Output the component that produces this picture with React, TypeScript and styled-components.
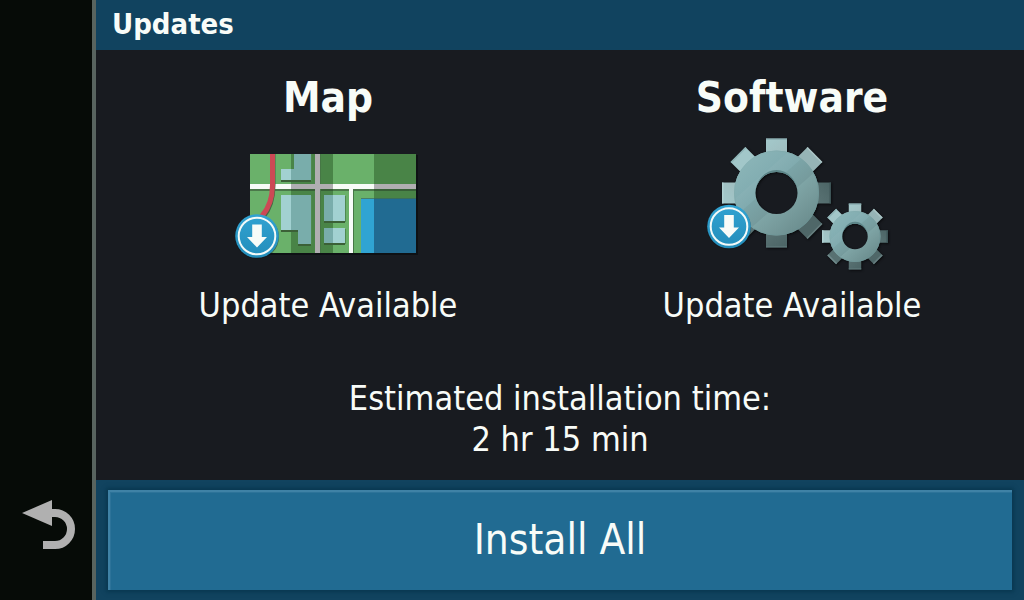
import React from "react";
import styled, { createGlobalStyle } from "styled-components";

const GlobalStyle = createGlobalStyle`
  *, *::before, *::after { box-sizing: border-box; }
  body {
    margin: 0;
    background: #181b20;
    color: #f8fcf8;
    font-family: "DejaVu Sans Condensed", "DejaVu Sans", sans-serif;
    font-stretch: condensed;
  }
`;

const Screen = styled.div`
  display: flex;
  min-height: 100vh;
`;

const SideBar = styled.nav`
  display: flex;
  flex-direction: column;
  justify-content: flex-end;
  flex: 0 0 96px;
  padding: 0 14px 44px 17px;
  background: #060b07;
  border-right: 4px solid #58645f;
`;

const BackButton = styled.button`
  display: flex;
  padding: 0;
  border: 0;
  background: none;
  cursor: pointer;
`;

const Panel = styled.div`
  display: flex;
  flex-direction: column;
  flex: 1;
  min-width: 0;
`;

const TitleBar = styled.header`
  height: 50px;
  padding: 0 16px;
  background: #11435f;
`;

const Title = styled.h1`
  margin: 0;
  font-size: 29px;
  line-height: 48px;
  font-weight: bold;
`;

const Content = styled.main`
  flex: 1;
  padding-top: 24px;
  text-align: center;
`;

const Updates = styled.div`
  display: grid;
  grid-template-columns: 1fr 1fr;
`;

const Update = styled.section`
  display: flex;
  flex-direction: column;
  align-items: center;
`;

const UpdateName = styled.h2`
  margin: 0;
  font-size: 42px;
  line-height: 48px;
  font-weight: bold;
`;

const Picture = styled.svg`
  width: 200px;
  height: 150px;
  margin: 8px 0 5px;
`;

const Message = styled.p`
  margin: 0;
  font-size: 34px;
  line-height: 41px;
`;

const Estimate = styled(Message)`
  margin-top: 52px;
`;

const ActionBar = styled.footer`
  display: flex;
  padding: 10px 12px;
  background: #11435f;
`;

const InstallButton = styled.button`
  flex: 1;
  height: 100px;
  padding: 0;
  border: 0;
  background: #216b92;
  box-shadow: inset 2px 2px 0 #3f82a6, inset 3px 3px 0 #2d7399, 0 0 4px 2px #083750;
  color: inherit;
  font: inherit;
  font-size: 42px;
  line-height: 48px;
  cursor: pointer;
`;

function Badge({ x, y }: { x: number; y: number }) {
  return (
    <g transform={`translate(${x} ${y})`}>
      <circle cy="1" r="22" fill="#0d1316" opacity=".45" />
      <circle r="21.8" fill="url(#badge)" />
      <circle r="18.3" fill="none" stroke="#f3faf8" strokeWidth="2" />
      <path d="M-4.800 -11.500H4.800V1H10L0 11.500L-10 1H-4.800Z" fill="#f8fcf8" />
    </g>
  );
}

function MapPicture() {
  return (
    <Picture viewBox="228 130 200 150" aria-hidden="true">
      <defs>
        <linearGradient id="badge" x1="0" y1="0" x2="0" y2="1">
          <stop offset="0" stopColor="#31a3d2" />
          <stop offset="1" stopColor="#238dba" />
        </linearGradient>
        <clipPath id="mapEdge"><path d="M250 154H416V253H250Z" /></clipPath>
      </defs>
      <path d="M251 155H418V255H251Z" fill="#0e1114" />
      <g clipPath="url(#mapEdge)">
        <path d="M250 154H416V253H250Z" fill="#6ab16a" />
        <path d="M291 154H333V253H291ZM374 154H416V253H374Z" fill="#498447" />
        <path d="M250 189H416V191H250Z" fill="#4b784a" />
        <path d="M291 189H333V191H291ZM374 189H416V191H374Z" fill="#375f36" />
        <path d="M281 180H311V182H281ZM281 230H298V232H281ZM298 244H311V246H298ZM324 221H345V223H324ZM324 243H345V245H324Z" fill="#3b6037" />
        <path d="M311 154H312V181H311ZM311 196H312V245H311ZM345 196H346V222H345ZM345 229H346V244H345Z" fill="#4f8950" />
        <path d="M281 169H291V180H281ZM281 195H291V230H281ZM333 195H345V221H333ZM333 228H345V243H333Z" fill="#a2d1d1" />
        <path d="M291 169H294V154H311V180H291ZM291 195H311V244H298V230H291ZM324 195H333V221H324ZM324 228H333V243H324Z" fill="#79adab" />
        <path d="M361 199H374V253H361Z" fill="#30a4d3" />
        <path d="M374 199H416V253H374Z" fill="#216b92" />
        <path d="M361 198H416V199H361Z" fill="#315f6c" opacity=".6" />
        <path d="M250 184H416V189H250ZM349 188H353V253H349Z" fill="#f8fcf8" />
        <path d="M353 190H354V253H353ZM320 154H321V253H320Z" fill="#467745" />
        <path d="M291 184H333V189H291ZM374 184H416V189H374ZM315 154H320V253H315Z" fill="#b0aeb1" />
        <path d="M273 154V185Q273 205 263 217L258 222" fill="none" stroke="#426b43" strokeWidth="5" />
        <path d="M272.500 154V185Q272.500 204 262 216L257 221" fill="none" stroke="#cc4955" strokeWidth="5" />
      </g>
      <Badge x={257} y={236} />
    </Picture>
  );
}

const teeth = [
  { face: "url(#toothLight)", edge: "#89adb0" },
  { face: "#96b4b6", edge: "#b0c9ca" },
  { face: "url(#toothDark)", edge: "#395052" },
  { face: "#4f6768", edge: "#6d8586" },
  { face: "url(#toothDark)", edge: "#5d7778" },
  { face: "#587172", edge: "#769192" },
  { face: "url(#toothLight)", edge: "#b4d3d4" },
  { face: "#a2c7c9", edge: "#8bb0b3" },
];

type GearProps = { x: number; y: number; reach: number; body: number; hole: number; tooth: number };

function Gear({ x, y, reach, body, hole, tooth }: GearProps) {
  const ring = `M${-body} 0A${body} ${body} 0 1 1 ${body} 0A${body} ${body} 0 1 1 ${-body} 0ZM${-hole} 0A${hole} ${hole} 0 1 0 ${hole} 0A${hole} ${hole} 0 1 0 ${-hole} 0Z`;
  return (
    <g transform={`translate(${x} ${y})`} filter="url(#gearShadow)">
      {teeth.map(({ face, edge }, i) => (
        <g key={i} transform={`rotate(${i * 45})`}>
          <rect x={-tooth / 2} y={-reach} width={tooth} height={reach - body + 5} fill={face} />
          <rect x={-tooth / 2} y={-reach} width={tooth} height="1.500" fill={edge} opacity=".8" />
        </g>
      ))}
      <path d={ring} fill="url(#gearFace)" fillRule="evenodd" />
      <circle r={body - 0.5} fill="none" stroke="url(#gearRim)" />
      <path
        d={`M${-hole} 0A${hole} ${hole + 2} 0 0 1 ${hole} 0A${hole} ${hole} 0 0 0 ${-hole} 0Z`}
        fill="#5d8689"
      />
    </g>
  );
}

function GearsPicture() {
  return (
    <Picture viewBox="692 130 200 150" aria-hidden="true">
      <defs>
        <linearGradient id="gearFace" x1=".15" y1=".1" x2=".85" y2=".9">
          <stop offset="0" stopColor="#8ab4b7" />
          <stop offset=".24" stopColor="#83aeb2" />
          <stop offset=".25" stopColor="#87b0b4" />
          <stop offset=".39" stopColor="#81abaf" />
          <stop offset=".4" stopColor="#7ba4a7" />
          <stop offset=".6" stopColor="#769b9d" />
          <stop offset=".61" stopColor="#7ea4a5" />
          <stop offset=".75" stopColor="#789c9d" />
          <stop offset="1" stopColor="#6b8d8e" />
        </linearGradient>
        <linearGradient id="gearRim" x1="0" y1="0" x2="1" y2="1">
          <stop offset="0" stopColor="#8eb9bc" />
          <stop offset="1" stopColor="#658a8b" />
        </linearGradient>
        <linearGradient id="toothLight" x1="0" y1="0" x2="1" y2="1">
          <stop offset="0" stopColor="#a3c9cb" />
          <stop offset="1" stopColor="#9fbcbe" />
        </linearGradient>
        <linearGradient id="toothDark" x1="0" y1="0" x2="1" y2="1">
          <stop offset="0" stopColor="#4b6465" />
          <stop offset="1" stopColor="#5b7475" />
        </linearGradient>
        <filter id="gearShadow" x="-10%" y="-10%" width="120%" height="120%" colorInterpolationFilters="sRGB">
          <feDropShadow dx="1" dy="1" stdDeviation="1" floodColor="#060809" floodOpacity=".8" />
        </filter>
      </defs>
      <Gear x={776.5} y={193} reach={54.5} body={42.5} hole={21} tooth={21} />
      <Gear x={855} y={236.5} reach={33} body={25.5} hole={12.7} tooth={12.5} />
      <Badge x={729} y={226.5} />
    </Picture>
  );
}

export default function App() {
  return (
    <Screen>
      <GlobalStyle />
      <SideBar>
        <BackButton type="button" aria-label="Back">
          <svg width="60" height="60" viewBox="17 496 60 60" aria-hidden="true">
            <path d="M22 513L52 500V526Z" fill="#b0b0b0" />
            <path d="M51 513H55A16 16 0 0 1 55 545H43" fill="none" stroke="#b0b0b0" strokeWidth="8" />
          </svg>
        </BackButton>
      </SideBar>
      <Panel>
        <TitleBar>
          <Title>Updates</Title>
        </TitleBar>
        <Content>
          <Updates>
            <Update>
              <UpdateName>Map</UpdateName>
              <MapPicture />
              <Message>Update Available</Message>
            </Update>
            <Update>
              <UpdateName>Software</UpdateName>
              <GearsPicture />
              <Message>Update Available</Message>
            </Update>
          </Updates>
          <Estimate>
            Estimated installation time:
            <br />2 hr 15 min
          </Estimate>
        </Content>
        <ActionBar>
          <InstallButton type="button">Install All</InstallButton>
        </ActionBar>
      </Panel>
    </Screen>
  );
}
